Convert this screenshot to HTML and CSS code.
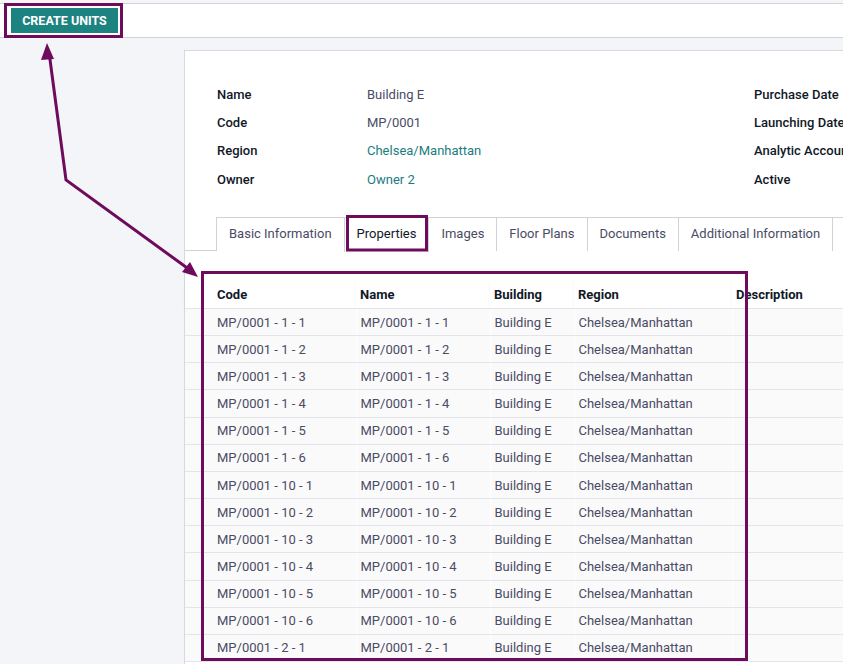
FILE: index.html
```html
<!DOCTYPE html>
<html>
<head>
<meta charset="utf-8">
<link rel="stylesheet" href="styles.css">
</head>
<body>
<div class="topbar">
  <button class="btn-primary">CREATE UNITS</button>
</div>
<div class="content">
  <div class="sheet">
    <div class="groups">
      <div class="group">
        <div class="field"><span class="label">Name</span><span class="value">Building E</span></div>
        <div class="field"><span class="label">Code</span><span class="value">MP/0001</span></div>
        <div class="field"><span class="label">Region</span><span class="value link">Chelsea/Manhattan</span></div>
        <div class="field"><span class="label">Owner</span><span class="value link">Owner 2</span></div>
      </div>
      <div class="group">
        <div class="field"><span class="label">Purchase Date</span></div>
        <div class="field"><span class="label">Launching Date</span></div>
        <div class="field"><span class="label">Analytic Account</span></div>
        <div class="field"><span class="label">Active</span></div>
      </div>
    </div>
    <ul class="tabs">
      <li class="tab">Basic Information</li>
      <li class="tab active">Properties</li>
      <li class="tab">Images</li>
      <li class="tab">Floor Plans</li>
      <li class="tab">Documents</li>
      <li class="tab">Additional Information</li>
      <li class="tab">Notes</li>
    </ul>
    <table class="list">
      <colgroup>
        <col class="c-code"><col class="c-name"><col class="c-building"><col class="c-region"><col class="c-desc">
      </colgroup>
      <thead>
        <tr><th>Code</th><th>Name</th><th>Building</th><th>Region</th><th>Description</th></tr>
      </thead>
      <tbody>
        <tr><td>MP/0001 - 1 - 1</td><td>MP/0001 - 1 - 1</td><td>Building E</td><td>Chelsea/Manhattan</td><td></td></tr>
        <tr><td>MP/0001 - 1 - 2</td><td>MP/0001 - 1 - 2</td><td>Building E</td><td>Chelsea/Manhattan</td><td></td></tr>
        <tr><td>MP/0001 - 1 - 3</td><td>MP/0001 - 1 - 3</td><td>Building E</td><td>Chelsea/Manhattan</td><td></td></tr>
        <tr><td>MP/0001 - 1 - 4</td><td>MP/0001 - 1 - 4</td><td>Building E</td><td>Chelsea/Manhattan</td><td></td></tr>
        <tr><td>MP/0001 - 1 - 5</td><td>MP/0001 - 1 - 5</td><td>Building E</td><td>Chelsea/Manhattan</td><td></td></tr>
        <tr><td>MP/0001 - 1 - 6</td><td>MP/0001 - 1 - 6</td><td>Building E</td><td>Chelsea/Manhattan</td><td></td></tr>
        <tr><td>MP/0001 - 10 - 1</td><td>MP/0001 - 10 - 1</td><td>Building E</td><td>Chelsea/Manhattan</td><td></td></tr>
        <tr><td>MP/0001 - 10 - 2</td><td>MP/0001 - 10 - 2</td><td>Building E</td><td>Chelsea/Manhattan</td><td></td></tr>
        <tr><td>MP/0001 - 10 - 3</td><td>MP/0001 - 10 - 3</td><td>Building E</td><td>Chelsea/Manhattan</td><td></td></tr>
        <tr><td>MP/0001 - 10 - 4</td><td>MP/0001 - 10 - 4</td><td>Building E</td><td>Chelsea/Manhattan</td><td></td></tr>
        <tr><td>MP/0001 - 10 - 5</td><td>MP/0001 - 10 - 5</td><td>Building E</td><td>Chelsea/Manhattan</td><td></td></tr>
        <tr><td>MP/0001 - 10 - 6</td><td>MP/0001 - 10 - 6</td><td>Building E</td><td>Chelsea/Manhattan</td><td></td></tr>
        <tr><td>MP/0001 - 2 - 1</td><td>MP/0001 - 2 - 1</td><td>Building E</td><td>Chelsea/Manhattan</td><td></td></tr>
      </tbody>
    </table>
  </div>
</div>
<svg class="annotations" width="843" height="664" viewBox="0 0 843 664">
  <rect x="5.5" y="4.5" width="116" height="32" class="hl"/>
  <rect x="347.5" y="216.5" width="79" height="33.5" class="hl"/>
  <rect x="202.5" y="272.5" width="544" height="387" class="hl"/>
  <polyline points="49,52 66,180 190,270" class="arrow"/>
  <polygon points="47,43 41,60 54,59" class="head"/>
  <polygon points="198,277 182,272 190,262" class="head"/>
</svg>
</body>
</html>
```
FILE: styles.css
```css
html, body {
  margin: 0;
  padding: 0;
  overflow: hidden;
  width: 843px;
  height: 664px;
}
body {
  background: #f4f5f9;
  font-family: Roboto, "Liberation Sans", sans-serif;
  font-size: 13px;
  color: #4a4b64;
  position: relative;
}
.topbar {
  margin-top: 3px;
  height: 29px;
  background: #fff;
  border-top: 1px solid #d2d3d9;
  border-bottom: 1px solid #d2d3d9;
  padding: 4px 0 0 11px;
  display: flex;
  align-items: flex-start;
}
.btn-primary {
  background: #1d8380;
  color: #fff;
  border: 0;
  height: 25px;
  width: 107px;
  padding: 0;
  font-family: Roboto, "Liberation Sans", sans-serif;
  font-weight: 700;
  font-size: 12.5px;
}
.content {
  padding: 12px 0 0 184px;
}
.sheet {
  background: #fff;
  border-left: 1px solid #d8d9df;
  border-top: 1px solid #d8d9df;
  width: 900px;
  height: 640px;
  padding-top: 29px;
  box-sizing: border-box;
}
.groups {
  display: grid;
  grid-template-columns: 537px 1fr;
  padding-left: 32px;
  height: 113px;
}
.field {
  display: flex;
  height: 28.33px;
  align-items: center;
}
.label {
  width: 150px;
  font-weight: 500;
  color: #111827;
  white-space: nowrap;
}
.value { color: #4a4b64; }
.value.link { color: #1b7d81; }
.tabs {
  list-style: none;
  margin: 24px 0 0;
  padding: 0 0 0 31px;
  display: flex;
  border-bottom: 1px solid #d0d1d9;
  height: 33px;
}
.tab {
  border: 1px solid #d0d1d9;
  border-bottom: 0;
  margin-right: -1px;
  padding: 0 12px;
  height: 33px;
  line-height: 31px;
  color: #4a4b64;
  white-space: nowrap;
  background: #fff;
}
.tab.active {
  color: #111827;
  height: 34px;
}
.list {
  margin-top: 29px;
  border-collapse: collapse;
  table-layout: fixed;
  width: 900px;
}
.c-code { width: 171px; }
.c-name { width: 134px; }
.c-building { width: 84px; }
.c-region { width: 158px; }
.list th {
  text-align: left;
  font-weight: 700;
  color: #111827;
  height: 28px;
  padding: 0 4px;
  background: #fff;
  border-bottom: 1px solid #e4e5ea;
  box-shadow: 0 2px 3px rgba(0,0,0,0.06);
}
.list td {
  height: 26.17px;
  padding: 0 4px;
  background: #fafafb;
  border-bottom: 1px solid #e4e5ea;
  border-left: 1px solid #fff;
  white-space: nowrap;
}
.list th:first-child, .list td:first-child {
  padding-left: 32px;
  border-left: 0;
}
.annotations {
  position: absolute;
  left: 0;
  top: 0;
  pointer-events: none;
}
.hl, .arrow {
  fill: none;
  stroke: #6e0b5c;
  stroke-width: 3;
}
.head { fill: #6e0b5c; }
```
